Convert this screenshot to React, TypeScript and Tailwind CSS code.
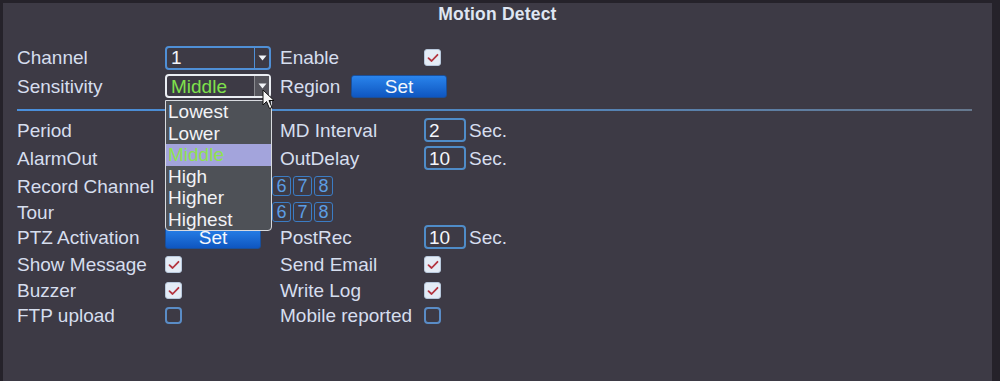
import React from 'react';
import clsx from 'clsx';

const font = { fontFamily: '"Liberation Sans", Arial, sans-serif' };

// Red tick inside a light box
const CheckBox = ({ checked }: { checked: boolean }) =>
  checked ? (
    <div className="w-[17px] h-[17px] rounded-[3px] bg-[#e4ecf6] border border-[#b8c8dc] flex items-center justify-center">
      <svg width="12" height="10" viewBox="0 0 12 10">
        <path d="M1.5 5.2 L4.6 8 L10.5 1.8" fill="none" stroke="#b3343f" strokeWidth="1.8" strokeLinecap="round" strokeLinejoin="round" />
      </svg>
    </div>
  ) : (
    <div className="w-[17px] h-[17px] rounded-[4px] border-2 border-[#5a8cc6]" />
  );

const Select = ({ value, active, green }: { value: string; active?: boolean; green?: boolean }) => (
  <div
    className={clsx(
      'w-[106px] h-[24px] rounded-[4px] border-2 flex items-center',
      active ? 'border-[#ebeef3]' : 'border-[#4f8fd6]',
    )}
  >
    <span className={clsx('flex-1 pl-[4px] text-[19px] leading-none', green ? 'text-[#7fe04c]' : 'text-[#f2f4f8]')}>{value}</span>
    <div className={clsx('w-[15px] h-full border-l flex items-center justify-center', active ? 'border-[#8a8a90] bg-[#55545c]' : 'border-[#4f8fd6]')}>
      <svg width="9" height="6" viewBox="0 0 9 6">
        <path d="M0.5 0.5 H8.5 L4.5 5.5 Z" fill="#f2f4f8" />
      </svg>
    </div>
  </div>
);

const SetButton = ({ w }: { w: string }) => (
  <div className={clsx('h-[23px] rounded-[3px] bg-gradient-to-b from-[#2a84ec] to-[#0f56c0] border border-[#1a4f9a] flex items-center justify-center text-[19px] leading-none text-[#f4f7fc]', w)}>
    Set
  </div>
);

const NumInput = ({ value }: { value: string }) => (
  <div className="flex items-center">
    <div className="w-[42px] h-[24px] rounded-[4px] border-2 border-[#4f8cc8] flex items-center pl-[3px] text-[19px] leading-none text-[#f4f6fa]">{value}</div>
    <span className="ml-[3px] text-[19px] leading-none text-[#d6deee]">Sec.</span>
  </div>
);

// channels 1-5 sit under the open list, only 6-8 show
const ChannelBoxes = () => (
  <div className="flex gap-[2px] ml-[107px]">
    {[6, 7, 8].map((n) => (
      <div key={n} className="w-[19px] h-[20px] rounded-[3px] border-[1.5px] border-[#3b7cc4] flex items-center justify-center text-[18px] leading-none text-[#5c9ee4]">
        {n}
      </div>
    ))}
  </div>
);

interface RowProps {
  h: string;
  label: string;
  control?: React.ReactNode;
  label2?: string;
  control2?: React.ReactNode;
}

const Row = ({ h, label, control, label2, control2 }: RowProps) => (
  <div className={clsx('flex items-center pl-[17px]', h)}>
    <div className="w-[148px] text-[19px] leading-none text-[#d6deee] whitespace-nowrap">{label}</div>
    <div className="w-[115px] flex items-center">{control}</div>
    <div className="w-[144px] text-[19px] leading-none text-[#d6deee] whitespace-nowrap">{label2}</div>
    <div className="flex items-center">{control2}</div>
  </div>
);

const options = ['Lowest', 'Lower', 'Middle', 'High', 'Higher', 'Highest'];

export default function App() {
  return (
    <div style={font} className="relative w-[1000px] h-[381px] overflow-hidden bg-[#3d3a45] border-t-[3px] border-l-[3px] border-r-[8px] border-[#25222a]">
      {/* Title */}
      <div className="h-[23px] flex items-center justify-center text-[17.5px] font-bold text-[#dfe6f2] tracking-[0.2px]">
        Motion Detect
      </div>

      <div className="mt-[17px] -ml-[3px]">
        <Row h="h-[29px]" label="Channel" control={<Select value="1" />} label2="Enable" control2={<CheckBox checked />} />
        <Row h="h-[28px]" label="Sensitivity" control={<Select value="Middle" active green />} label2="Region" control2={<div className="-ml-[73px]"><SetButton w="w-[96px]" /></div>} />

        {/* Divider */}
        <div className="ml-[17px] mt-[9px] mb-[5px] w-[955px] h-[2px] bg-gradient-to-r from-[#4a8fdc] via-[#4f86bf] to-[#66788e]" />

        <Row h="h-[28px]" label="Period" label2="MD Interval" control2={<NumInput value="2" />} />
        <Row h="h-[28px]" label="AlarmOut" label2="OutDelay" control2={<NumInput value="10" />} />
        <Row h="h-[28px]" label="Record Channel" control={<ChannelBoxes />} />
        <Row h="h-[24px]" label="Tour" control={<ChannelBoxes />} />
        <Row h="h-[26px]" label="PTZ Activation" control={<SetButton w="w-[96px]" />} label2="PostRec" control2={<NumInput value="10" />} />
        <Row h="h-[29px]" label="Show Message" control={<CheckBox checked />} label2="Send Email" control2={<CheckBox checked />} />
        <Row h="h-[23px]" label="Buzzer" control={<CheckBox checked />} label2="Write Log" control2={<CheckBox checked />} />
        <Row h="h-[26px]" label="FTP upload" control={<CheckBox checked={false} />} label2="Mobile reported" control2={<CheckBox checked={false} />} />
      </div>

      {/* Open dropdown list */}
      <div className="absolute left-[162px] top-[97px] w-[107px] h-[131px] bg-[#4e5157] border border-[#d8dadf] rounded-b-[4px] flex flex-col">
        {options.map((o, i) => (
          <div
            key={o}
            className={clsx(
              'h-[21.5px] flex items-center pl-[2px] text-[19px] leading-none',
              i === 2 ? 'bg-[#a3a4dc] text-[#8fe24e]' : 'text-[#f2f3f6]',
            )}
          >
            {o}
          </div>
        ))}
      </div>

      {/* Mouse pointer */}
      <svg className="absolute left-[259px] top-[86px]" width="14" height="21" viewBox="0 0 14 21">
        <path d="M1 1 L1 16 L4.5 12.5 L7.5 19.5 L10 18.5 L7 11.5 L12 11.5 Z" fill="#f6f6f6" stroke="#111" strokeWidth="1" strokeLinejoin="round" />
      </svg>
    </div>
  );
}
